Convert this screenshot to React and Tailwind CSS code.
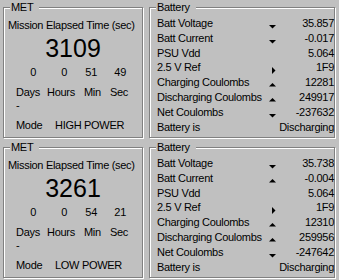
const panels = [
  {
    met: '3109',
    parts: ['0', '0', '51', '49'],
    mode: 'HIGH POWER',
    battery: [
      ['Batt Voltage', 'down', '35.857'],
      ['Batt Current', 'down', '-0.017'],
      ['PSU Vdd', null, '5.064'],
      ['2.5 V Ref', 'right', '1F9'],
      ['Charging Coulombs', 'up', '12281'],
      ['Discharging Coulombs', 'up', '249917'],
      ['Net Coulombs', 'down', '-237632'],
      ['Battery is', null, 'Discharging'],
    ],
  },
  {
    met: '3261',
    parts: ['0', '0', '54', '21'],
    mode: 'LOW POWER',
    battery: [
      ['Batt Voltage', 'down', '35.738'],
      ['Batt Current', 'up', '-0.004'],
      ['PSU Vdd', null, '5.064'],
      ['2.5 V Ref', 'right', '1F9'],
      ['Charging Coulombs', 'up', '12310'],
      ['Discharging Coulombs', 'up', '259956'],
      ['Net Coulombs', 'down', '-247642'],
      ['Battery is', null, 'Discharging'],
    ],
  },
]

// little trend markers next to the battery values
function Trend({ dir }) {
  if (!dir) return null
  const pts = {
    down: '0,9 7,9 3.5,12.5',
    up: '3.5,8 7,11.5 0,11.5',
    right: '3,7 3,14 6.5,10.5',
  }[dir]
  return (
    <svg width="8" height="15" viewBox="0 0 8 15" className="block">
      <polygon points={pts} fill="#000" />
    </svg>
  )
}

function GroupBox({ title, className, children }) {
  return (
    <div className={`relative border border-[#808080] shadow-[inset_1px_1px_0_#fff,1px_1px_0_#fff] ${className}`}>
      <span className="absolute -top-[6px] left-[6px] h-[11px] bg-[#c0c0c0] pl-[1px] pr-[6px] leading-[11px]">{title}</span>
      {children}
    </div>
  )
}

function MetBox({ p }) {
  return (
    <GroupBox title="MET" className="w-[140px] h-[131px] pt-[10px]">
      <div className="h-[14px] pl-[4px] leading-[14px]">Mission Elapsed Time (sec)</div>
      <div className="mt-[2px] h-[28px] text-center text-[25px] leading-[28px] tracking-normal">{p.met}</div>
      <div className="mt-[3px] flex h-[14px] pl-[12px] leading-[14px]">
        <span className="w-[20px] text-right">{p.parts[0]}</span>
        <span className="w-[31px] text-right">{p.parts[1]}</span>
        <span className="w-[30px] text-right">{p.parts[2]}</span>
        <span className="w-[29px] text-right">{p.parts[3]}</span>
      </div>
      <div className="mt-[6px] flex h-[14px] pl-[12px] leading-[14px]">
        <span className="w-[31px]">Days</span>
        <span className="w-[37px]">Hours</span>
        <span className="w-[26px]">Min</span>
        <span>Sec</span>
      </div>
      <div className="h-[12px] pl-[12px] leading-[12px]">-</div>
      <div className="mt-[7px] flex h-[14px] pl-[12px] leading-[14px]">
        <span className="w-[39px]">Mode</span>
        <span>{p.mode}</span>
      </div>
    </GroupBox>
  )
}

function BatteryBox({ p }) {
  return (
    <GroupBox title="Battery" className="w-[186px] h-[131px] pt-[8px] pl-[7px]">
      {p.battery.map(([label, dir, value]) => (
        <div key={label} className="flex h-[14.8px] leading-[14.8px]">
          <span className="flex-1">{label}</span>
          <span className="w-[8px]"><Trend dir={dir} /></span>
          <span className="w-[57px] text-right">{value}</span>
        </div>
      ))}
    </GroupBox>
  )
}

export default function App() {
  return (
    <div className="h-[280px] w-[339px] overflow-hidden bg-[#c0c0c0] pt-[7px] pl-[3px] font-['Liberation_Sans',Arial,sans-serif] text-[11px] tracking-[-0.3px] text-black">
      <div className="flex flex-col gap-[9px]">
        {panels.map((p) => (
          <div key={p.met} className="flex gap-[6px]">
            <MetBox p={p} />
            <BatteryBox p={p} />
          </div>
        ))}
      </div>
    </div>
  )
}
